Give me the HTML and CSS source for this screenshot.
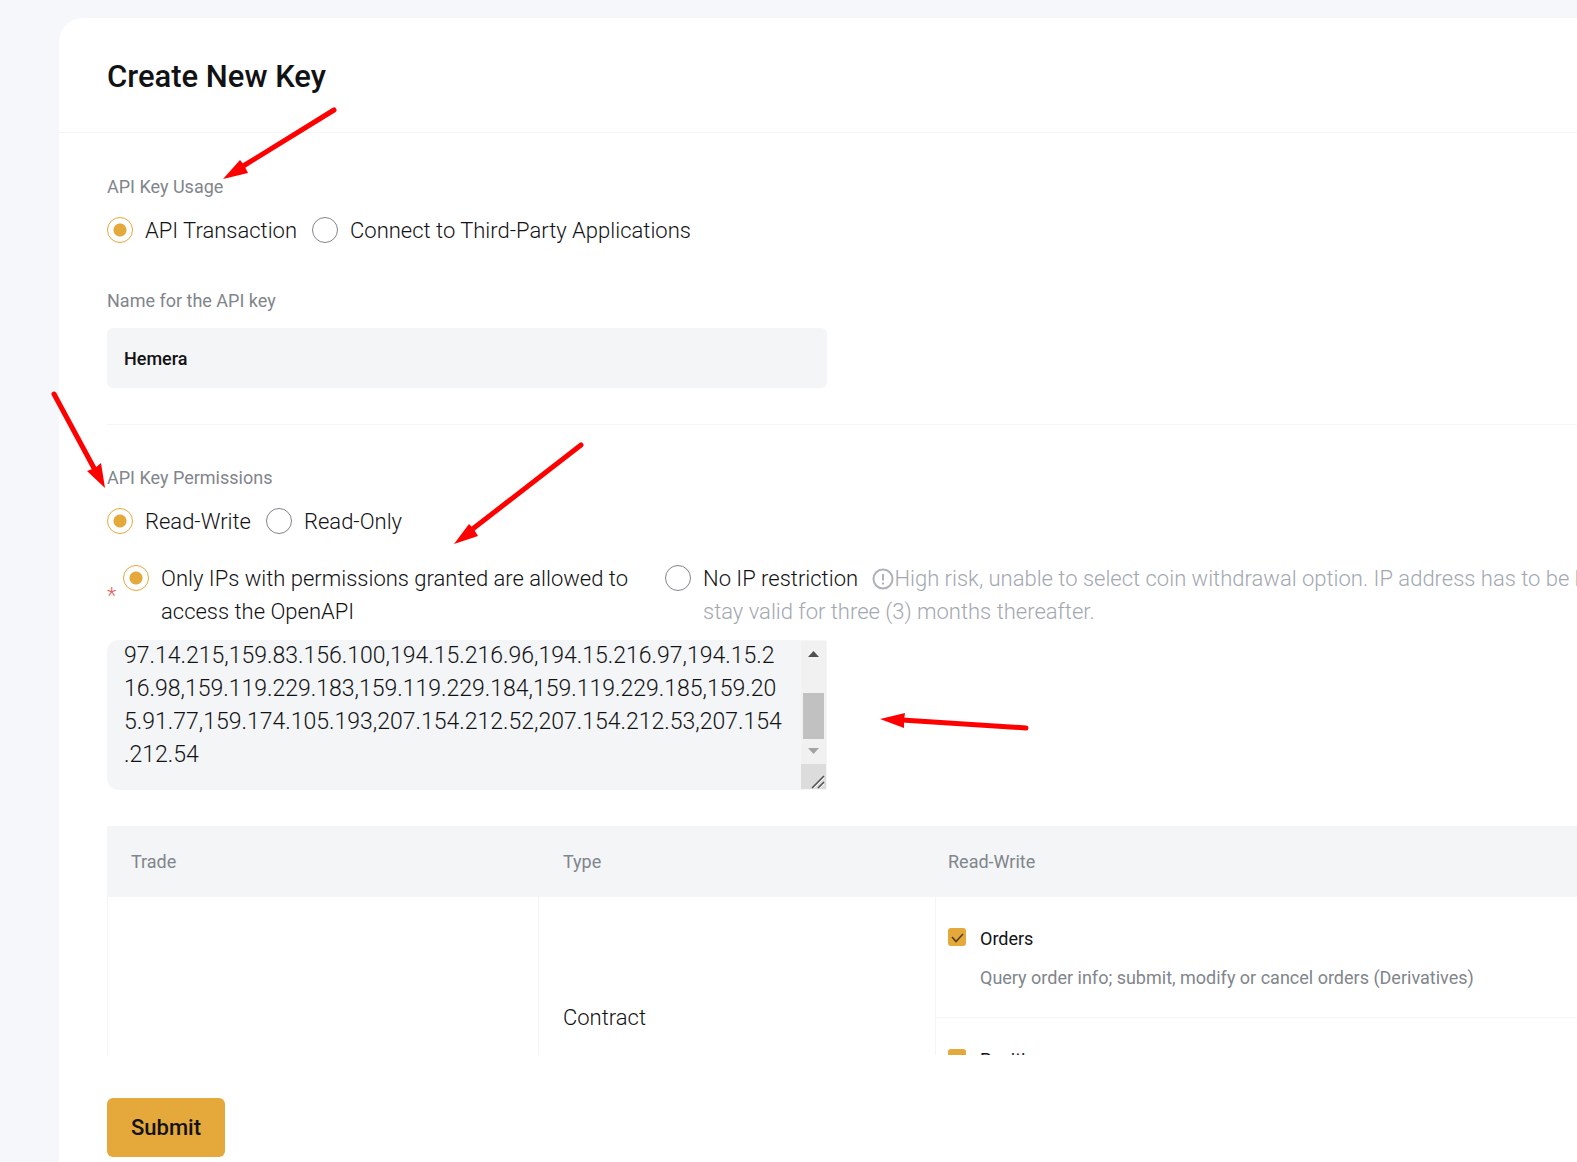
FILE: index.html
```html
<!DOCTYPE html>
<html lang="en">
<head>
<meta charset="utf-8">
<meta name="viewport" content="width=device-width, initial-scale=1">
<title>Create New Key</title>
<link rel="stylesheet" href="styles.css">
</head>
<body>
<main class="card">
  <header class="card-header">
    <h1 class="title">Create New Key</h1>
  </header>

  <form class="form">
    <fieldset class="group usage">
      <legend class="caption">API Key Usage</legend>
      <div class="options">
        <label class="option"><input class="radio" type="radio" name="usage" checked>API Transaction</label>
        <label class="option"><input class="radio" type="radio" name="usage">Connect to Third-Party Applications</label>
      </div>
    </fieldset>

    <div class="name-field">
      <label class="caption" for="key-name">Name for the API key</label>
      <input class="text-input" id="key-name" type="text" value="Hemera">
    </div>

    <fieldset class="group permissions">
      <legend class="caption">API Key Permissions</legend>
      <div class="options">
        <label class="option"><input class="radio" type="radio" name="access" checked>Read-Write</label>
        <label class="option"><input class="radio" type="radio" name="access">Read-Only</label>
      </div>
    </fieldset>

    <div class="ip-options">
      <span class="required">*</span>
      <label class="option ip-granted"><input class="radio" type="radio" name="ip" checked><span>Only IPs with permissions granted are allowed to<br>access the OpenAPI</span></label>
      <label class="option ip-open"><input class="radio" type="radio" name="ip"><span>No IP restriction <span class="hint"><svg class="info" viewBox="0 0 22 22" aria-hidden="true"><circle cx="11" cy="11" r="9.5"/><path d="M11 6v6.500M11 14.500v2"/></svg>High risk, unable to select coin withdrawal option. IP address has to be bound and<br>stay valid for three (3) months thereafter.</span></span></label>
    </div>

    <div class="ip-box">
      <textarea class="ip-list" id="ip-list" aria-label="Allowed IP addresses">159.65.12.40,159.65.12.41,159.65.12.42,159.65.12.4
3,159.83.156.98,159.83.156.99,159.97.14.214,159.
97.14.215,159.83.156.100,194.15.216.96,194.15.216.97,194.15.2
16.98,159.119.229.183,159.119.229.184,159.119.229.185,159.20
5.91.77,159.174.105.193,207.154.212.52,207.154.212.53,207.154
.212.54</textarea>
      <svg class="scrollbar" viewBox="0 0 25 148" aria-hidden="true">
        <path fill="#f1f1f1" d="M0 0h25v124H0z"/>
        <path fill="#c1c1c1" d="M2 52h21v46H2z"/>
        <path fill="#505050" d="M7 16l5.500-6 5.500 6z"/>
        <path fill="#a3a3a3" d="M7 107l5.500 6 5.500-6z"/>
        <path fill="#dcdcdc" d="M0 123h25v25H0z"/>
        <path stroke="#fff" d="M13 147l10-10M19 147l4-4"/>
        <path stroke="#505050" stroke-width="1.500" d="M11 147l12-12M17 147l6-6"/>
      </svg>
    </div>

    <div class="table-view">
      <table class="table">
        <colgroup><col class="col-trade"><col class="col-type"><col></colgroup>
        <thead>
          <tr><th scope="col">Trade</th><th scope="col">Type</th><th scope="col">Read-Write</th></tr>
        </thead>
        <tbody>
          <tr>
            <td rowspan="2"></td>
            <td rowspan="2">Contract</td>
            <td class="right">
              <label class="permission"><input class="check" type="checkbox" checked>Orders</label>
              <p class="description">Query order info; submit, modify or cancel orders (Derivatives)</p>
            </td>
          </tr>
          <tr>
            <td class="right">
              <label class="permission"><input class="check" type="checkbox" checked>Positions</label>
              <p class="description">Query position info; modify positions (Derivatives)</p>
            </td>
          </tr>
        </tbody>
      </table>
    </div>

    <button class="submit" type="submit">Submit</button>
  </form>
</main>

<svg class="arrows" width="1100" height="800" viewBox="0 0 1100 800" aria-hidden="true">
  <path class="shaft" d="M334 110 240 168M54 394 95 470M581 445 470 531M1026 728 902 720"/>
  <path class="head" d="M223 179 240 160 244 165 248 173ZM105 488 87 471 95 468 101 463ZM454 544 469 524 473 528 478 536ZM880 719 905 713 904 720 904 728Z"/>
</svg>
<script src="script.js"></script>
</body>
</html>
```
FILE: styles.css
```css
*,
*::before,
*::after {
  box-sizing: border-box;
}

body {
  margin: 0;
  padding: 18px 0 0 59px;
  overflow-x: hidden;
  background: #f5f7fb;
  color: #121214;
  font: 300 22px/33px Roboto, "Liberation Sans", sans-serif;
}

.card {
  min-height: calc(100vh - 18px);
  border-top-left-radius: 24px;
  background: #fff;
  overflow: hidden;
}

.card-header {
  padding: 38px 48px 34px;
  border-bottom: 1px solid #f3f5f7;
}

.title {
  margin: 0;
  font-size: 31px;
  font-weight: 500;
  line-height: 42px;
}

.form {
  display: flex;
  flex-direction: column;
  align-items: flex-start;
  padding: 42px 0 5px 48px;
}

.group {
  min-width: 0;
  margin: 0;
  padding: 0;
  border: 0;
}

.caption {
  display: block;
  padding: 0;
  color: #81858c;
  font-size: 18px;
  font-weight: 400;
  line-height: 24px;
}

.options {
  display: flex;
  gap: 15px;
  margin-top: 15px;
}

.option {
  display: flex;
  gap: 12px;
  white-space: nowrap;
}

.radio {
  appearance: none;
  flex: none;
  width: 26px;
  height: 26px;
  margin: 3px 0 0;
  border: 1px solid #81858c;
  border-radius: 50%;
  background: #fff;
}

.radio:checked {
  border-color: #e4a93a;
  background: radial-gradient(circle, #e4a93a 6px, #fff 7px);
}

.name-field {
  align-self: stretch;
  margin-top: 42px;
  padding-bottom: 36px;
  border-bottom: 1px solid #f3f5f7;
}

.text-input {
  display: block;
  width: 720px;
  max-width: 100%;
  height: 60px;
  margin-top: 15px;
  padding: 0 17px;
  border: 0;
  border-radius: 6px;
  background: #f3f5f7;
  color: #121214;
  font: 500 18px/24px Roboto, "Liberation Sans", sans-serif;
}

.permissions {
  margin-top: 41px;
}

.ip-options {
  display: flex;
  align-items: center;
  margin-top: 24px;
}

.required {
  width: 16px;
  color: #e8605a;
}

.ip-granted {
  width: 542px;
}

.hint {
  margin-left: 9px;
  color: #a3a8b0;
}

.info {
  width: 22px;
  height: 22px;
  vertical-align: -4px;
  fill: none;
  stroke: #adb1b8;
  stroke-width: 2;
}

.ip-box {
  display: flex;
  width: 720px;
  max-width: 100%;
  height: 150px;
  margin-top: 12px;
  padding: 1px;
  border-radius: 12px 3px 3px 12px;
  background: #f3f5f7;
}

.ip-list {
  flex: 1;
  min-width: 0;
  padding: 18px 16px;
  border: 0;
  background: transparent;
  color: #121214;
  font: inherit;
  font-size: 23px;
  white-space: pre;
  overflow-x: hidden;
  overflow-y: scroll;
  scrollbar-width: none;
  resize: none;
}

.scrollbar {
  flex: none;
  width: 25px;
  height: 148px;
}

.table-view {
  align-self: stretch;
  max-height: 229px;
  margin-top: 36px;
  overflow: hidden;
}

.table {
  width: 100%;
  table-layout: fixed;
  border-spacing: 0;
}

.col-trade {
  width: 432px;
}

.col-type {
  width: 397px;
}

.table th {
  height: 71px;
  padding: 0 24px;
  background: #f3f5f7;
  color: #81858c;
  font-size: 18px;
  font-weight: 400;
  line-height: 24px;
  text-align: left;
}

.table th:last-child {
  padding-left: 12px;
}

.table td {
  padding: 0 24px;
  border: 0 solid #f3f5f7;
  border-width: 0 1px 1px 0;
}

.table td:first-child:not(.right) {
  border-left-width: 1px;
}

.table td.right {
  padding: 30px 12px 27px;
  border-right-width: 0;
  font-size: 18px;
  line-height: 24px;
  vertical-align: top;
}

.permission {
  display: flex;
  gap: 14px;
  font-weight: 400;
}

.check {
  appearance: none;
  flex: none;
  width: 18px;
  height: 18px;
  margin: 1px 0 0;
  border-radius: 3px;
  background: #e4a93a;
}

.check:checked {
  background-image: url("data:image/svg+xml,%3Csvg xmlns='http://www.w3.org/2000/svg' viewBox='0 0 18 18'%3E%3Cpath d='M4 9L8 13.500L15 6' fill='none' stroke='%2354411f' stroke-width='1.700'/%3E%3C/svg%3E");
}

.description {
  margin: 15px 0 0 32px;
  color: #81858c;
  font-weight: 400;
}

.submit {
  height: 59px;
  margin-top: 43px;
  padding: 0 24px;
  border: 0;
  border-radius: 6px;
  background: #e4a93a;
  color: #121214;
  font: 500 22px/33px Roboto, "Liberation Sans", sans-serif;
}

.arrows {
  position: absolute;
  top: 0;
  left: 0;
  pointer-events: none;
}

.shaft {
  fill: none;
  stroke: #f00;
  stroke-width: 5;
  stroke-linecap: round;
}

.head {
  fill: #f00;
}
```
FILE: script.js
```js
const ipList = document.getElementById("ip-list");
ipList.scrollTop = ipList.scrollHeight;
```
